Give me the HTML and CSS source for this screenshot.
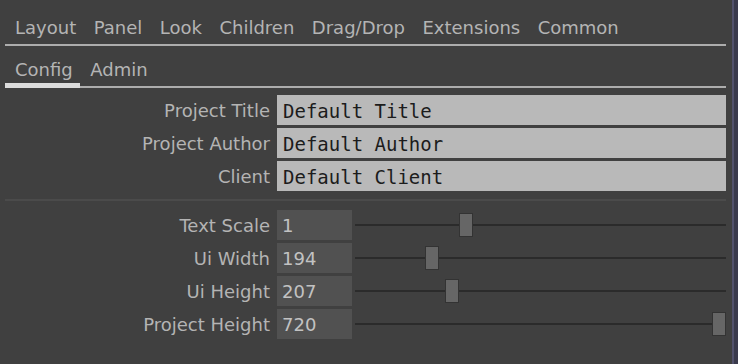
FILE: index.html
```html
<!DOCTYPE html>
<html lang="en">
<head>
    <meta charset="UTF-8">
    <meta name="viewport" content="width=device-width, initial-scale=1.0">
    <title>Panel Settings</title>
    <link rel="stylesheet" href="styles.css">
</head>
<body>
    <div class="panel">
        <div class="tabs">
            <div class="tab">Layout</div>
            <div class="tab">Panel</div>
            <div class="tab">Look</div>
            <div class="tab">Children</div>
            <div class="tab">Drag/Drop</div>
            <div class="tab">Extensions</div>
            <div class="tab">Common</div>
        </div>
        <div class="tabs sub-tabs">
            <div class="tab active">Config</div>
            <div class="tab">Admin</div>
        </div>

        <div class="form">
            <label class="label">Project Title</label>
            <div class="text-field">Default Title</div>
            <label class="label">Project Author</label>
            <div class="text-field">Default Author</div>
            <label class="label">Client</label>
            <div class="text-field">Default Client</div>
        </div>

        <div class="separator"></div>

        <div class="form">
            <label class="label">Text Scale</label>
            <div class="num-row">
                <div class="num-field">1</div>
                <div class="slider"><div class="lane"><div class="thumb" style="left: 29%"></div></div></div>
            </div>
            <label class="label">Ui Width</label>
            <div class="num-row">
                <div class="num-field">194</div>
                <div class="slider"><div class="lane"><div class="thumb" style="left: 19.5%"></div></div></div>
            </div>
            <label class="label">Ui Height</label>
            <div class="num-row">
                <div class="num-field">207</div>
                <div class="slider"><div class="lane"><div class="thumb" style="left: 25.1%"></div></div></div>
            </div>
            <label class="label">Project Height</label>
            <div class="num-row">
                <div class="num-field">720</div>
                <div class="slider"><div class="lane"><div class="thumb" style="left: 100%"></div></div></div>
            </div>
        </div>
    </div>
    <div class="edge"></div>
</body>
</html>
```

FILE: styles.css
```css
html, body {
    height: 100%;
}
body {
    margin: 0;
    display: flex;
    background-color: #404040;
    font-family: "DejaVu Sans", Verdana, sans-serif;
    font-size: 18px;
    color: #b4b4b4;
    overflow: hidden;
}
.panel {
    flex: 1;
    padding: 0 6px 0 5px;
}
.edge {
    width: 4px;
    border-left: 2px solid #52526c;
    background-color: #3a3a4c;
}
.tabs {
    display: flex;
    padding-top: 18px;
    border-bottom: 2px solid #adadad;
}
.tab {
    position: relative;
    padding: 0 7.5px 6px 10px;
    line-height: 20px;
}
.sub-tabs {
    padding-top: 14px;
}
.tab.active::after {
    content: "";
    position: absolute;
    left: 0;
    right: 0;
    bottom: -2px;
    height: 5px;
    background-color: #dcdcdc;
}
.form {
    display: grid;
    grid-template-columns: 265px 1fr;
    column-gap: 7px;
    row-gap: 3px;
    margin-top: 7px;
}
.label {
    text-align: right;
    height: 30px;
    line-height: 32px;
    white-space: nowrap;
}
.text-field {
    height: 30px;
    line-height: 32px;
    padding-left: 6px;
    background-color: #b9b9b9;
    color: #1c1c1c;
    font-family: "DejaVu Sans Mono", monospace;
    font-size: 19px;
}
.separator {
    height: 2px;
    margin-top: 8px;
    background-color: #4b4b4b;
}
.form + .separator + .form {
    margin-top: 9px;
}
.num-row {
    display: flex;
    gap: 3px;
}
.num-field {
    width: 70px;
    height: 30px;
    line-height: 32px;
    padding-left: 5px;
    background-color: #515151;
    color: #c2c2c2;
}
.slider {
    position: relative;
    flex: 1;
}
.slider::before {
    content: "";
    position: absolute;
    left: 0;
    right: 0;
    top: 14px;
    height: 2px;
    background-color: #2b2b2b;
}
.lane {
    position: absolute;
    left: 0;
    right: 14px;
    top: 3px;
    height: 24px;
}
.thumb {
    position: absolute;
    top: 0;
    width: 12px;
    height: 22px;
    background-color: #666;
    border: 1px solid #333;
}
```
